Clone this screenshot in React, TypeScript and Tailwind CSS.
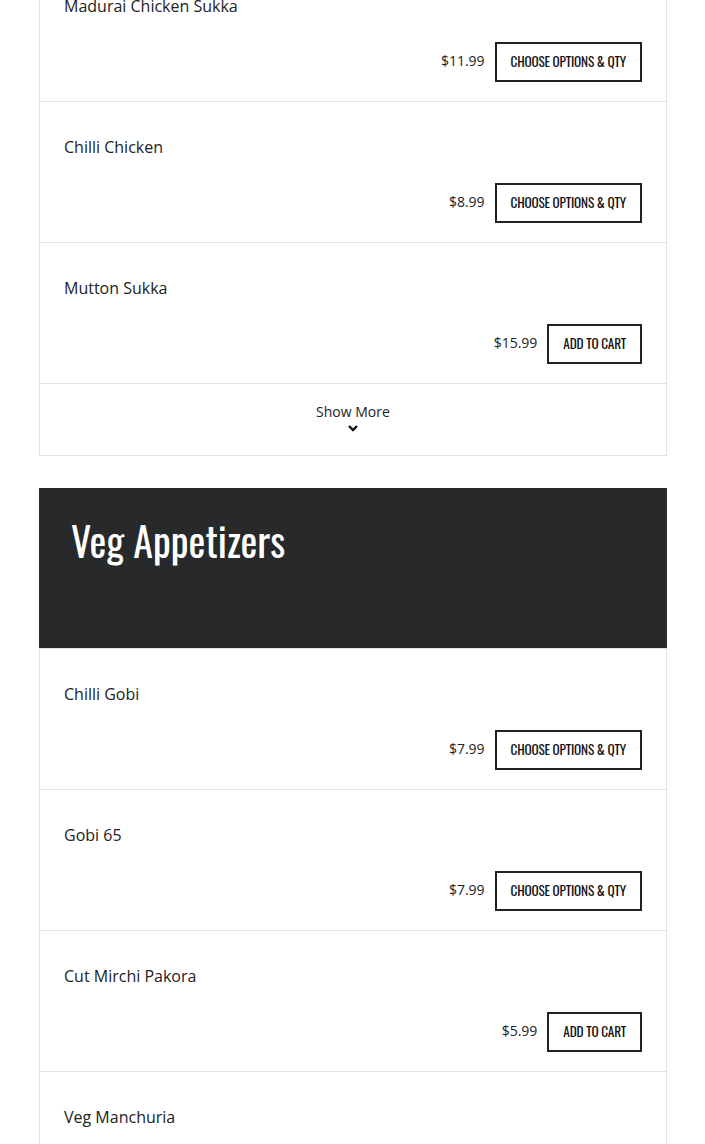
import React from 'react';

type Item = { name: string; price: string; options: boolean };

const meat: Item[] = [
  { name: 'Madurai Chicken Sukka', price: '$11.99', options: true },
  { name: 'Chilli Chicken', price: '$8.99', options: true },
  { name: 'Mutton Sukka', price: '$15.99', options: false },
];

const veg: Item[] = [
  { name: 'Chilli Gobi', price: '$7.99', options: true },
  { name: 'Gobi 65', price: '$7.99', options: true },
  { name: 'Cut Mirchi Pakora', price: '$5.99', options: false },
  { name: 'Veg Manchuria', price: '$6.99', options: true },
];

const condensed = "font-['Oswald','DejaVu_Sans_Condensed','Liberation_Sans_Narrow',sans-serif]";

const MenuRow: React.FC<{ item: Item }> = ({ item }) => (
  <div className="border-t border-[#e1e1e1] pl-6 pr-[24px] pt-[33px] pb-[19px]">
    <div className="text-base leading-6 text-[#222]">{item.name}</div>
    <div className="mt-[24px] flex items-center justify-end gap-[10px]">
      <span className="-mt-[2px] text-sm leading-5 text-[#222]">{item.price}</span>
      <button
        className={`h-10 border-2 border-[#222] bg-white px-[14px] text-[13.3px] uppercase tracking-[-0.2px] text-[#111] ${condensed}`}
      >
        {item.options ? 'Choose Options & Qty' : 'Add to Cart'}
      </button>
    </div>
  </div>
);

const App: React.FC = () => {
  return (
    <div className="min-h-screen overflow-hidden bg-white font-['Open_Sans',sans-serif]">
      <div className="ml-[39px] w-[628px] -mt-[40px]">
        <div className="border-x border-b border-[#e1e1e1]">
          {meat.map((item) => (
            <MenuRow key={item.name} item={item} />
          ))}
          <div className="flex flex-col items-center border-t border-[#e1e1e1] pt-[18px] pb-[21px]">
            <span className="text-sm leading-5 text-[#222]">Show More</span>
            <svg width="12" height="12" viewBox="0 0 12 12" className="text-[#111]">
              <polyline points="2,4 6,8 10,4" fill="none" stroke="currentColor" strokeWidth="2.4" />
            </svg>
          </div>
        </div>

        <div className="mt-[32px] h-[160px] bg-[#28292b] px-[32px] pt-[25px]">
          <h2 className={`text-[40px] leading-[54px] text-white ${condensed}`}>Veg Appetizers</h2>
        </div>
        <div className="border-x border-[#e1e1e1]">
          {veg.map((item) => (
            <MenuRow key={item.name} item={item} />
          ))}
        </div>
      </div>
    </div>
  );
};

export default App;
